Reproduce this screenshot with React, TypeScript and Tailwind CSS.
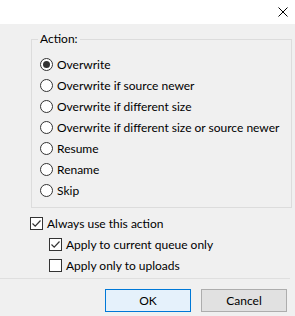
import React from "react";

const actions = [
  "Overwrite",
  "Overwrite if source newer",
  "Overwrite if different size",
  "Overwrite if different size or source newer",
  "Resume",
  "Rename",
  "Skip",
];

function Radio({ checked }: { checked?: boolean }) {
  return (
    <span className="flex h-[13px] w-[13px] shrink-0 items-center justify-center rounded-full border border-[#333333] bg-white">
      {checked && <span className="h-[7px] w-[7px] rounded-full bg-[#333333]" />}
    </span>
  );
}

function Check({ checked }: { checked?: boolean }) {
  return (
    <span className="flex h-[13px] w-[13px] shrink-0 items-center justify-center border border-[#333333] bg-white">
      {checked && (
        <svg width="11" height="11" viewBox="0 0 11 11">
          <path d="M1.5 5.5 L4.2 8.2 L9.5 2.5" fill="none" stroke="#333333" strokeWidth="1.2" />
        </svg>
      )}
    </span>
  );
}

export default function App() {
  return (
    <div
      className="flex h-[316px] w-[295px] flex-col overflow-hidden bg-[#f0f0f0] text-[12px] text-black"
      style={{ fontFamily: '"Segoe UI", Lato, sans-serif' }}
    >
      {/* Title bar */}
      <div className="flex h-[24px] items-center justify-end bg-white pr-[7px]">
        <svg width="10" height="10" viewBox="0 0 10 10">
          <path d="M0.5 0.5 L9.5 9.5 M9.5 0.5 L0.5 9.5" stroke="#000" strokeWidth="1" />
        </svg>
      </div>

      {/* Action group */}
      <fieldset className="ml-[31px] mt-[7px] w-[261px] border border-[#dcdcdc] pl-[8px] pb-[6px]">
        <legend className="ml-[-2px] h-[16px] px-[2px] leading-[16px]">Action:</legend>
        <div className="pt-[7px]">
          {actions.map((a, i) => (
            <label key={a} className="flex h-[21px] items-center gap-[4px] whitespace-nowrap">
              <Radio checked={i === 0} />
              <span className="leading-[16px]">{a}</span>
            </label>
          ))}
        </div>
      </fieldset>

      {/* Options */}
      <div className="mt-[5px] pl-[30px]">
        <label className="flex h-[21px] items-center gap-[4px]">
          <Check checked />
          <span>Always use this action</span>
        </label>
        <div className="pl-[19px]">
          <label className="flex h-[21px] items-center gap-[4px]">
            <Check checked />
            <span>Apply to current queue only</span>
          </label>
          <label className="flex h-[21px] items-center gap-[4px]">
            <Check />
            <span>Apply only to uploads</span>
          </label>
        </div>
      </div>

      {/* Separator */}
      <div className="mt-[2px] h-px w-[290px] bg-[#dfdfdf]" />

      {/* Buttons */}
      <div className="flex justify-end gap-[10px] pr-[8px] pt-[10px]">
        <button className="h-[23px] w-[86px] border border-[#0078d7] bg-[#e5f1fb]">OK</button>
        <button className="h-[23px] w-[86px] border border-[#adadad] bg-[#e1e1e1]">Cancel</button>
      </div>
    </div>
  );
}
